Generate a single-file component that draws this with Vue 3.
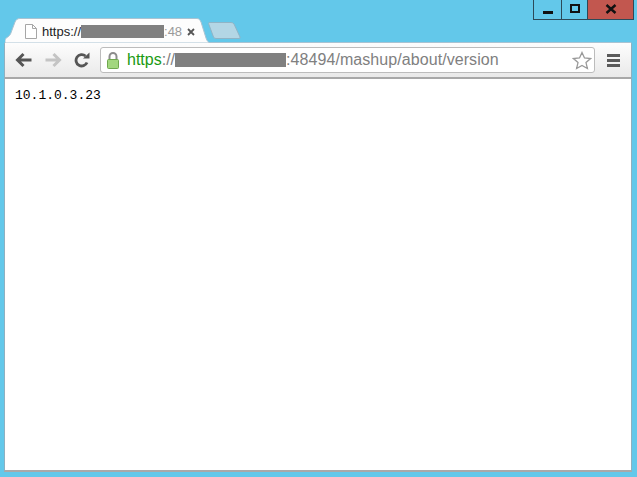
<script setup>
const version = '10.1.0.3.23'
</script>

<template>
  <div class="desktop">
    <div class="caption">
      <div class="ctl ctl-min"><i></i></div>
      <div class="ctl ctl-max"><i></i></div>
      <div class="ctl ctl-close">
        <svg width="12" height="10" viewBox="0 0 12 10">
          <path d="M1.500 1 L10.500 9 M10.500 1 L1.500 9" stroke="#111" stroke-width="2.400" fill="none" />
        </svg>
      </div>
    </div>

    <div class="tabstrip">
      <div class="tab">
        <svg class="tab-bg" width="205" height="25" viewBox="0 0 205 25">
          <path d="M0 25 V22 C0 20 4 19 5.500 16 L10 4 C11 2 12 .5 15 .5 L192 .5 C194 .5 195 2 196 4 L201 20 C202 23 203 24 205 25 Z" fill="#fdfdfd" stroke="#a9c3d2" stroke-width="1" />
        </svg>
        <svg class="page-icon" width="12" height="15" viewBox="0 0 12 15">
          <path d="M.5 .5 H7.500 L11.500 4.500 V14.500 H.5 Z M7.500 .5 V4.500 H11.500" fill="#fff" stroke="#a6a6a6" />
        </svg>
        <div class="tab-title">https://<span class="redact tab-redact"></span><span class="tab-fade">:48</span></div>
        <svg class="tab-close" width="8" height="8" viewBox="0 0 8 8">
          <path d="M1 1 L7 7 M7 1 L1 7" stroke="#555" stroke-width="1.800" fill="none" />
        </svg>
      </div>
      <svg class="newtab" width="33" height="17" viewBox="0 0 33 17">
        <path d="M.5 1.500 Q.5 .5 2 .5 H23 Q25 .5 26 2 L32 15 Q32.500 16.500 31 16.500 H8 Q6 16.500 5.500 15 Z" fill="#b3d6e5" stroke="#8fb4c6" />
      </svg>
    </div>

    <div class="window">
      <div class="toolbar">
        <svg class="nav" width="18" height="16" viewBox="0 0 18 16">
          <path d="M16.500 8 H3 M8.500 2 L2.500 8 L8.500 14" stroke="#555" stroke-width="3" fill="none" />
        </svg>
        <svg class="nav nav-fwd" width="18" height="16" viewBox="0 0 18 16">
          <path d="M1.500 8 H15 M9.500 2 L15.500 8 L9.500 14" stroke="#c4c4c4" stroke-width="3" fill="none" />
        </svg>
        <svg class="nav nav-reload" width="16" height="16" viewBox="0 0 16 16">
          <path d="M13 10.500 A5.700 5.700 0 1 1 11.500 4" stroke="#555" stroke-width="2.800" fill="none" />
          <path d="M9 6.500 H15.500 V0.500 Z" fill="#555" />
        </svg>

        <div class="omnibox">
          <svg class="lock" width="14" height="17" viewBox="0 0 14 17">
            <path d="M3.500 8 V4.500 A3.500 3.500 0 0 1 10.500 4.500 V8" stroke="#8d8d8d" stroke-width="2" fill="none" />
            <rect x="1.500" y="7.500" width="11" height="9" rx="1" fill="#a2d77e" stroke="#6fa84e" />
          </svg>
          <span class="url"><span class="scheme">https</span><span class="sep">://</span><span class="redact url-redact"></span><span class="path">:48494/mashup/about/version</span></span>
          <svg class="star" width="20" height="19" viewBox="0 0 20 19">
            <path d="M10 1.500 L12.500 7 L18.500 7.600 L14 11.600 L15.400 17.500 L10 14.400 L4.600 17.500 L6 11.600 L1.500 7.600 L7.500 7 Z" fill="#fff" stroke="#9a9a9a" stroke-width="1.300" />
          </svg>
        </div>

        <div class="menu"><i></i><i></i><i></i></div>
      </div>
      <div class="page">{{ version }}</div>
    </div>
  </div>
</template>

<style>
html, body { margin: 0; overflow: hidden; }
</style>

<style scoped>
.desktop {
  width: 637px;
  height: 477px;
  background: #63c8ea;
  padding: 0 5px 5px 4px;
  box-sizing: border-box;
  display: flex;
  flex-direction: column;
  position: relative;
}
.caption {
  display: flex;
  justify-content: flex-end;
  height: 20px;
  margin-right: -2px;
  flex: none;
}
.ctl {
  border: 1px solid #2c4a59;
  border-top: 0;
  box-sizing: border-box;
  display: flex;
  align-items: center;
  justify-content: center;
}
.ctl-min { width: 29px; }
.ctl-max { width: 26px; border-left: 0; }
.ctl-close { width: 46px; border-left: 0; background: #c2574f; }
.ctl-min i { width: 10px; height: 3px; background: #111; margin-top: 5px; }
.ctl-max i { width: 6px; height: 5px; border: 2px solid #111; margin-top: -2px; }
.ctl-close svg { margin-top: -2px; }

.tabstrip {
  height: 22px;
  flex: none;
  display: flex;
  align-items: flex-end;
  padding-left: 1px;
  position: relative;
}
.tab {
  width: 205px;
  height: 23px;
  position: relative;
  display: flex;
  align-items: center;
  padding: 0 0 0 20px;
  box-sizing: border-box;
  z-index: 2;
  margin-bottom: -1px;
  flex: none;
}
.tab-bg { position: absolute; left: 0; top: -2px; }
.page-icon { position: relative; flex: none; }
.tab-title {
  position: relative;
  font: 13px "Liberation Sans", Arial, sans-serif;
  color: #222;
  margin-left: 5px;
  width: 137px;
  white-space: nowrap;
  line-height: 16px;
  flex: none;
}
.tab-fade { color: #9a9a9a; }
.redact { display: inline-block; background: #808080; vertical-align: top; }
.tab-redact { width: 83px; height: 13px; margin-top: 1px; }
.tab-close { position: relative; margin-left: 8px; flex: none; }
.newtab { margin: 0 0 3px -2px; flex: none; position: relative; z-index: 1; }

.window {
  flex: 1;
  min-height: 0;
  display: flex;
  flex-direction: column;
  background: #fff;
  border: 1px solid #8fb0c0;
  border-top-color: #a9c3d2;
  border-bottom: 2px solid #a9a9a9;
  border-radius: 2px 2px 0 0;
  box-sizing: border-box;
}
.toolbar {
  height: 36px;
  flex: none;
  display: flex;
  align-items: center;
  padding: 0 10px;
  box-sizing: border-box;
  background: linear-gradient(#fdfdfd, #e9e9e9);
  border-bottom: 2px solid #a8a8a8;
}
.nav { flex: none; }
.nav-fwd { margin-left: 11px; }
.nav-reload { margin-left: 12px; }

.omnibox {
  margin-left: 10px;
  width: 495px;
  height: 26px;
  flex: none;
  display: flex;
  align-items: center;
  background: #fff;
  border: 1px solid #bcbcbc;
  border-radius: 3px;
  box-sizing: border-box;
  padding-left: 5px;
}
.lock { flex: none; }
.url {
  margin-left: 7px;
  font: 16px "Liberation Sans", Arial, sans-serif;
  color: #808080;
  white-space: nowrap;
  flex: 1;
  line-height: 20px;
}
.scheme { color: #1a9a12; }
.path { letter-spacing: .07px; }
.url-redact { width: 111px; height: 14px; margin-top: 3px; }
.star { flex: none; margin-right: 2px; }

.menu {
  margin-left: 12px;
  width: 13px;
  flex: none;
  display: flex;
  flex-direction: column;
  gap: 2px;
}
.menu i { height: 3px; background: #5a5a5a; display: block; }

.page {
  flex: 1;
  padding: 9px 10px;
  font: 13px/15px "Liberation Mono", "Courier New", monospace;
  color: #000;
}
</style>
